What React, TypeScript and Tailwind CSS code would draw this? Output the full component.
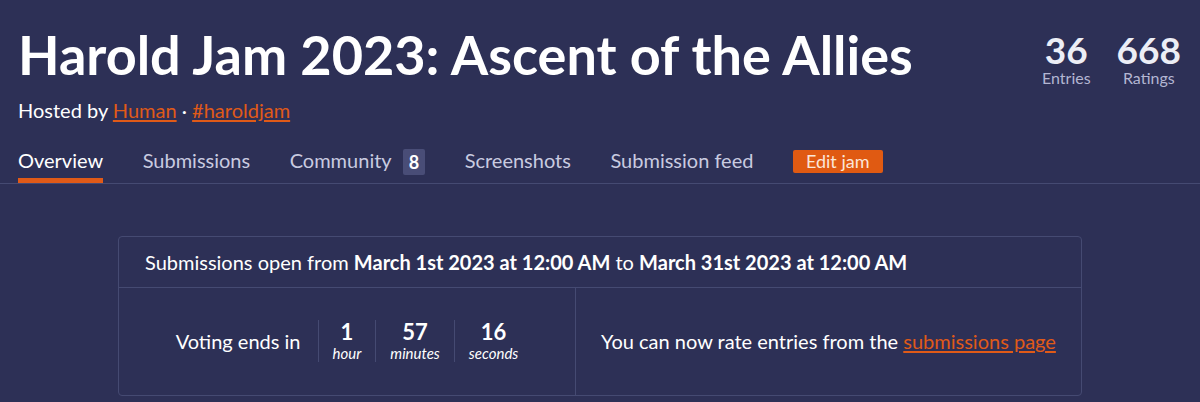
import React from 'react'

const tabs = [
  { label: 'Overview', active: true },
  { label: 'Submissions' },
  { label: 'Community', badge: '8' },
  { label: 'Screenshots' },
  { label: 'Submission feed' },
]

export default function App() {
  return (
    <div className="w-full h-[402px] overflow-hidden bg-[#2d3056] text-white font-['Lato','Liberation_Sans',sans-serif]">
      {/* Header */}
      <div className="flex justify-between pl-[18px] pr-[19px]">
        <div className="pt-[23px]">
          <h1 className="text-[54px] font-bold leading-[1.2] text-white">
            Harold Jam 2023: Ascent of the Allies
          </h1>
          <div className="mt-[10px] text-[20px] leading-[1.2] text-white">
            Hosted by{' '}
            <a className="text-[#e05a18] underline underline-offset-2">Human</a>
            {' · '}
            <a className="text-[#e05a18] underline underline-offset-2">#haroldjam</a>
          </div>
        </div>
        <div className="flex gap-[26px] pt-[31px]">
          <div className="flex flex-col items-center">
            <span className="text-[37px] font-bold leading-none text-[#eceef6]">36</span>
            <span className="text-[16px] leading-[1.2] text-[#b3b6d2]">Entries</span>
          </div>
          <div className="flex flex-col items-center">
            <span className="text-[37px] font-bold leading-none text-[#eceef6]">668</span>
            <span className="text-[16px] leading-[1.2] text-[#b3b6d2]">Ratings</span>
          </div>
        </div>
      </div>

      {/* Tabs */}
      <div className="mt-[26px] flex items-end gap-[39.5px] px-[18px] border-b border-[#454a72]">
        {tabs.map((t) => (
          <div
            key={t.label}
            className={`flex items-center gap-[11px] pb-[6px] border-b-[5px] text-[20px] leading-[1.2] ${
              t.active ? 'border-[#e05a18] text-white' : 'border-transparent text-[#c9cbe0]'
            }`}
          >
            {t.label}
            {t.badge && (
              <span className="mt-[1px] -mb-[3px] h-[26px] flex items-center px-[6px] rounded-[2px] bg-[#494d77] text-white font-bold text-[18px] leading-none">
                {t.badge}
              </span>
            )}
          </div>
        ))}
        <div className="self-start mt-[2px]">
          <span className="inline-block px-[13px] py-[1px] rounded-[2px] bg-[#e05a12] text-[#fbe6d8] text-[18px] leading-[1.2]">
            Edit jam
          </span>
        </div>
      </div>

      {/* Card */}
      <div className="mx-auto mt-[52px] w-[964px] border border-[#454a72] rounded-[4px]">
        <div className="h-[51px] flex items-center px-[26px] border-b border-[#454a72] text-[20px]">
          <span>
            Submissions open from <b>March 1st 2023 at 12:00 AM</b> to{' '}
            <b>March 31st 2023 at 12:00 AM</b>
          </span>
        </div>
        <div className="flex h-[107px]">
          <div className="w-[457px] pl-[14px] flex items-center justify-center border-r border-[#454a72]">
            <span className="text-[20px] mr-[17px]">Voting ends in</span>
            {[
              ['1', 'hour'],
              ['57', 'minutes'],
              ['16', 'seconds'],
            ].map(([n, l]) => (
              <div
                key={l}
                className="flex flex-col items-center px-[14px] border-l border-[#454a72]"
              >
                <span className="text-[22px] font-bold leading-[1.1]">{n}</span>
                <span className="text-[15px] italic leading-[1.2]">{l}</span>
              </div>
            ))}
          </div>
          <div className="flex-1 flex items-center justify-center text-[20px]">
            <span>
              You can now rate entries from the{' '}
              <a className="text-[#e05a18] underline underline-offset-2">submissions page</a>
            </span>
          </div>
        </div>
      </div>
    </div>
  )
}
